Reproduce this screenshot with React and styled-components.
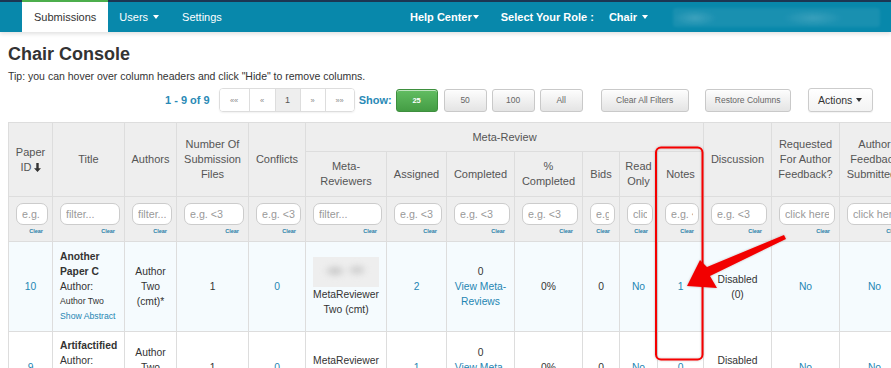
import React from 'react';
import styled, { createGlobalStyle } from 'styled-components';

const GlobalStyle = createGlobalStyle`
  html, body {
    margin: 0;
    padding: 0;
    background: #fff;
    overflow: hidden;
  }
  body {
    font-family: "Liberation Sans", Arial, sans-serif;
    color: #333;
  }
`;

const Page = styled.div`
  position: relative;
  width: 891px;
  height: 368px;
  overflow: hidden;
`;

const NavBar = styled.nav`
  position: relative;
  z-index: 1;
  display: flex;
  justify-content: space-between;
  align-items: stretch;
  height: 30px;
  padding: 0 11px 0 22px;
  border-top: 2px solid #1c3652;
  background: #0888ab;
  box-shadow: 0 2px 4px rgba(0, 0, 0, 0.12);
`;

const NavGroup = styled.div`
  display: flex;
  align-items: center;
`;

const NavItem = styled.div`
  display: flex;
  align-items: center;
  align-self: stretch;
  padding: 0 ${({ $pad }) => ($pad === undefined ? 11 : $pad)}px;
  margin-left: ${({ $ml }) => $ml || 0}px;
  font-size: 11px;
  font-weight: ${({ $bold }) => ($bold ? 'bold' : 'normal')};
  color: ${({ $active }) => ($active ? '#333' : '#fff')};
  background: ${({ $active }) => ($active ? '#fff' : 'transparent')};
  ${({ $active }) =>
    $active &&
    `
    margin-top: -2px;
    border-top: 2px solid #4cae4c;
  `}
`;

const Caret = styled.span`
  display: inline-block;
  width: 0;
  height: 0;
  margin-left: ${({ $ml }) => ($ml === undefined ? 5 : $ml)}px;
  border-top: 4px solid ${({ $dark }) => ($dark ? '#333' : '#fff')};
  border-left: 3.5px solid transparent;
  border-right: 3.5px solid transparent;
`;

const BlurredName = styled.div`
  width: 207px;
  height: 19px;
  margin-left: 25px;
  border-radius: 3px;
  background:
    radial-gradient(ellipse 22px 8px at 22px 10px, rgba(255, 255, 255, 0.16), transparent),
    radial-gradient(ellipse 30px 8px at 140px 10px, rgba(255, 255, 255, 0.14), transparent),
    rgba(255, 255, 255, 0.07);
  filter: blur(1.5px);
`;

const Main = styled.main`
  padding: 0 8px;
`;

const Title = styled.h1`
  margin: 11px 0 0;
  font-size: 18px;
  line-height: 22px;
  font-weight: bold;
  color: #333;
`;

const Tip = styled.p`
  margin: 4px 0 0;
  font-size: 10.5px;
  line-height: 14px;
  color: #333;
`;

const Toolbar = styled.div`
  display: flex;
  align-items: center;
  height: 24px;
  margin-top: 5px;
  padding-left: 157px;
`;

const Count = styled.span`
  font-size: 11px;
  font-weight: bold;
  color: #2a8ab6;
`;

const Pager = styled.div`
  display: flex;
  height: 22px;
  margin-left: 9px;
  border: 1px solid #ddd;
  border-radius: 4px;
  box-shadow: 0 1px 2px rgba(0, 0, 0, 0.06);
  overflow: hidden;
`;

const PageCell = styled.div`
  display: flex;
  align-items: center;
  justify-content: center;
  width: ${({ $w }) => $w}px;
  font-size: ${({ $active }) => ($active ? 9 : 7.5)}px;
  color: ${({ $active }) => ($active ? '#555' : '#8a8a8a')};
  background: ${({ $active }) => ($active ? '#eee' : '#fff')};
  & + & {
    border-left: 1px solid #ddd;
  }
`;

const ShowLabel = styled.span`
  margin-left: 4px;
  font-size: 11px;
  font-weight: bold;
  color: #2a8ab6;
`;

const Button = styled.div`
  display: flex;
  align-items: center;
  justify-content: center;
  box-sizing: border-box;
  width: ${({ $w }) => $w}px;
  height: ${({ $h }) => $h || 23}px;
  margin-left: ${({ $ml }) => $ml}px;
  border-radius: 3px;
  font-size: 8.5px;
  color: #666;
  border: 1px solid #c9c9c9;
  background: linear-gradient(#fdfdfd, #e4e4e4);
  box-shadow: inset 0 1px 0 rgba(255, 255, 255, 0.6);
  ${({ $green }) =>
    $green &&
    `
    color: #fff;
    font-weight: bold;
    font-size: 7.5px;
    border-color: #3e8f3e;
    background: linear-gradient(#62bd62, #449d44);
  `}
  ${({ $light }) =>
    $light &&
    `
    font-size: 10.5px;
    color: #333;
    border-color: #ccc;
    background: linear-gradient(#fff, #f3f3f3);
    box-shadow: 0 1px 1px rgba(0,0,0,0.05);
  `}
`;

const Table = styled.table`
  margin-top: 10px;
  width: 901px;
  table-layout: fixed;
  border-collapse: collapse;
`;

const HeadRow = styled.tr`
  height: ${({ $h }) => $h}px;
`;

const Th = styled.th`
  padding: 0 4px;
  border: 1px solid #ddd;
  background: #eee;
  color: #555;
  font-size: 11px;
  font-weight: normal;
  line-height: 15px;
  text-align: center;
  vertical-align: middle;
`;

const FilterCell = styled.th`
  padding: 6px 4px 0 7px;
  border: 1px solid #ddd;
  background: #eee;
  vertical-align: top;
  font-weight: normal;
`;

const FilterInput = styled.input`
  display: block;
  box-sizing: border-box;
  width: 100%;
  height: 22px;
  margin: 0;
  padding: 0 5px;
  border: 1px solid #ccc;
  border-radius: 7px;
  background: #fff;
  font-family: inherit;
  font-size: 10.7px;
  color: #555;
  outline: none;
  &::placeholder {
    color: #999;
  }
`;

const ClearLink = styled.div`
  margin-top: 3px;
  padding-right: 5px;
  font-size: 5.5px;
  line-height: 7px;
  font-weight: bold;
  text-align: right;
  color: #2a7fa8;
`;

const DataRow = styled.tr`
  height: ${({ $h }) => $h}px;
  background: ${({ $tint }) => ($tint ? '#f5fbfe' : '#fff')};
`;

const Td = styled.td`
  padding: 0 ${({ $left }) => ($left ? '4px 0 7px' : '4px')};
  border: 1px solid #ddd;
  font-size: 10.3px;
  line-height: 15px;
  text-align: ${({ $left }) => ($left ? 'left' : 'center')};
  vertical-align: middle;
  color: ${({ $link }) => ($link ? '#1f86b3' : '#333')};
`;

const Line = styled.div`
  font-size: ${({ $small }) => ($small ? 8.7 : 10.3)}px;
  font-weight: ${({ $bold }) => ($bold ? 'bold' : 'normal')};
  color: ${({ $link }) => ($link ? '#1f86b3' : 'inherit')};
  line-height: 15px;
`;

const Link = styled.span`
  color: #1f86b3;
`;

const Avatar = styled.div`
  position: relative;
  width: 66px;
  height: 30px;
  margin: 0 auto;
  background: #eeeeee;
  overflow: hidden;
  &::before {
    content: '';
    position: absolute;
    inset: 0;
    background:
      radial-gradient(ellipse 12px 7px at 22px 14px, #c4c4c4, transparent),
      radial-gradient(ellipse 11px 7px at 44px 13px, #c9c9c9, transparent);
    filter: blur(2.5px);
  }
`;

const Overlay = styled.svg`
  position: absolute;
  top: 0;
  left: 0;
  pointer-events: none;
`;

const SortArrow = () => (
  <svg width="7" height="9" viewBox="0 0 7 9" style={{ marginLeft: 2, verticalAlign: -1 }}>
    <path d="M2.3 0h2.4v5.2H7L3.5 9 0 5.2h2.3z" fill="#333" />
  </svg>
);

const widths = [44, 72, 52, 72, 57, 81, 60, 68, 68, 37, 38, 46, 68, 68, 70];

const placeholders = [
  'e.g. <3', 'filter...', 'filter...', 'e.g. <3', 'e.g. <3', 'filter...', 'e.g. <3',
  'e.g. <3', 'e.g. <3', 'e.g. <3', 'click here...', 'e.g. <3', 'e.g. <3',
  'click here...', 'click here...',
];

const metaColumns = ['Meta-Reviewers', 'Assigned', 'Completed', '% Completed', 'Bids', 'Read Only', 'Notes'];

const PaperRow = ({ id, tint, height, title, avatar, assigned, notes }) => (
  <DataRow $h={height} $tint={tint}>
    <Td $link>{id}</Td>
    <Td $left>
      <Line $bold>{title}</Line>
      <Line>Author:</Line>
      <Line $small>Author Two</Line>
      <Line $small $link>Show Abstract</Line>
    </Td>
    <Td>Author Two (cmt)*</Td>
    <Td>1</Td>
    <Td $link>0</Td>
    <Td>
      {avatar && <Avatar />}
      MetaReviewer Two (cmt)
    </Td>
    <Td $link>{assigned}</Td>
    <Td>
      <Line>0</Line>
      <Link>View Meta-Reviews</Link>
    </Td>
    <Td>0%</Td>
    <Td>0</Td>
    <Td $link>No</Td>
    <Td $link>{notes}</Td>
    <Td>
      Disabled
      <br />
      (0)
    </Td>
    <Td $link>No</Td>
    <Td $link>No</Td>
  </DataRow>
);

const App = () => (
  <Page>
    <GlobalStyle />
    <NavBar>
      <NavGroup>
        <NavItem $active $pad={12}>Submissions</NavItem>
        <NavItem>
          Users
          <Caret />
        </NavItem>
        <NavItem $pad={12}>Settings</NavItem>
      </NavGroup>
      <NavGroup>
        <NavItem $bold $pad={0}>
          Help Center
          <Caret $ml={1} />
        </NavItem>
        <NavItem $bold $pad={0} $ml={22}>Select Your Role :</NavItem>
        <NavItem $bold $pad={0} $ml={15}>
          Chair
          <Caret />
        </NavItem>
        <BlurredName />
      </NavGroup>
    </NavBar>

    <Main>
      <Title>Chair Console</Title>
      <Tip>Tip: you can hover over column headers and click "Hide" to remove columns.</Tip>

      <Toolbar>
        <Count>1 - 9 of 9</Count>
        <Pager>
          <PageCell $w={29}>««</PageCell>
          <PageCell $w={25}>«</PageCell>
          <PageCell $w={24} $active>1</PageCell>
          <PageCell $w={24}>»</PageCell>
          <PageCell $w={28}>»»</PageCell>
        </Pager>
        <ShowLabel>Show:</ShowLabel>
        <Button $green $w={42} $ml={4}>25</Button>
        <Button $w={43} $ml={6}>50</Button>
        <Button $w={43} $ml={5}>100</Button>
        <Button $w={43} $ml={5}>All</Button>
        <Button $w={88} $ml={18}>Clear All Filters</Button>
        <Button $w={86} $ml={16}>Restore Columns</Button>
        <Button $light $w={65} $h={24} $ml={17}>
          Actions
          <Caret $dark $ml={4} />
        </Button>
      </Toolbar>

      <Table>
        <colgroup>
          {widths.map((w, i) => (
            <col key={i} style={{ width: w }} />
          ))}
        </colgroup>
        <thead>
          <HeadRow $h={29}>
            <Th rowSpan={2}>
              Paper
              <br />
              ID
              <SortArrow />
            </Th>
            <Th rowSpan={2}>Title</Th>
            <Th rowSpan={2}>Authors</Th>
            <Th rowSpan={2}>Number Of Submission Files</Th>
            <Th rowSpan={2}>Conflicts</Th>
            <Th colSpan={7}>Meta-Review</Th>
            <Th rowSpan={2}>Discussion</Th>
            <Th rowSpan={2}>Requested For Author Feedback?</Th>
            <Th rowSpan={2}>Author Feedback Submitted?</Th>
          </HeadRow>
          <HeadRow $h={45}>
            {metaColumns.map((c) => (
              <Th key={c}>{c}</Th>
            ))}
          </HeadRow>
          <HeadRow $h={45}>
            {placeholders.map((p, i) => (
              <FilterCell key={i}>
                <FilterInput placeholder={p} readOnly />
                <ClearLink>Clear</ClearLink>
              </FilterCell>
            ))}
          </HeadRow>
        </thead>
        <tbody>
          <PaperRow id={10} tint height={90} title="Another Paper C" avatar assigned={2} notes={1} />
          <PaperRow id={9} height={72} title="Artifactified" assigned={1} notes={0} />
        </tbody>
      </Table>
    </Main>

    <Overlay width="891" height="368" viewBox="0 0 891 368">
      <defs>
        <filter id="soft" x="-20%" y="-20%" width="140%" height="140%">
          <feDropShadow dx="0" dy="0" stdDeviation="1.2" floodColor="#000" floodOpacity="0.25" />
        </filter>
      </defs>
      <rect
        x="656"
        y="147.5"
        width="46.5"
        height="212"
        rx="5"
        fill="none"
        stroke="#f50000"
        strokeWidth="2"
        filter="url(#soft)"
      />
      <polygon
        points="687,286 700,260 707,267 784,235 786,239 710,276 717,288"
        fill="#f20000"
        filter="url(#soft)"
      />
    </Overlay>
  </Page>
);

export default App;
